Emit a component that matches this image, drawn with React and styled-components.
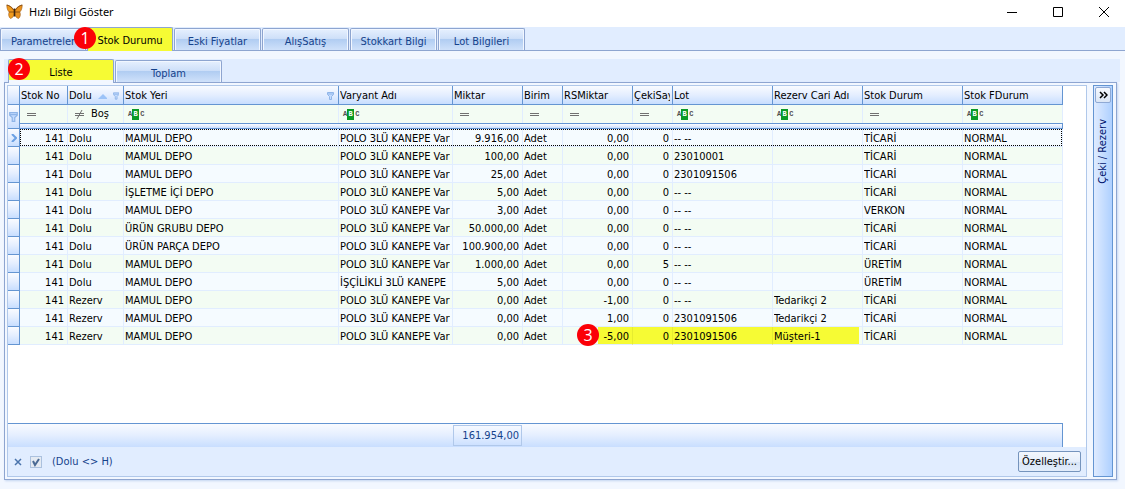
import React from 'react'
import styled, { createGlobalStyle, css } from 'styled-components'

const colors = {
  strip: '#e1edff',
  page: '#f2f7ff',
  line: '#8ea5d0',
  softLine: '#b0c8ea',
  gridLine: '#e1edff',
  headLine: '#6495d2',
  link: '#15428b',
  yellow: '#f6fb34',
}

const GlobalStyle = createGlobalStyle`
  * { box-sizing: border-box; }
  body {
    margin: 0;
    background: ${colors.page};
    color: #000;
    font: 11px/14px "DejaVu Sans Condensed", "DejaVu Sans", sans-serif;
  }
  button { font: inherit; color: inherit; }
`

const Window = styled.div`
  display: flex;
  flex-direction: column;
  min-height: 100vh;
`

const TitleBar = styled.header`
  display: flex;
  align-items: center;
  height: 27px;
  padding: 0 13px 4px 6px;
  background: #fff;
`

const Title = styled.h1`
  flex: 1;
  margin: 0 0 0 6px;
  font: 11px/16px "Noto Sans", "Open Sans", sans-serif;
`

const WindowButtons = styled.div`
  display: flex;
  gap: 30px;
`

const WindowButton = styled.button`
  display: flex;
  align-items: center;
  justify-content: center;
  width: 16px;
  height: 16px;
  padding: 0;
  border: 0;
  background: none;
`

const MainTabs = styled.nav`
  display: flex;
  align-items: flex-end;
  gap: 1px;
  height: 24px;
  border-bottom: 1px solid ${colors.line};
  background: ${colors.strip};
`

const SubTabs = styled(MainTabs)`
  height: 23px;
  margin-right: -3px;
  padding-left: 4px;
  border-bottom: 0;
`

const Tab = styled.button`
  position: relative;
  width: ${(p) => p.$width}px;
  height: 22px;
  padding: 4px 0 0;
  border: 1px solid ${colors.line};
  border-bottom: 0;
  border-radius: 2px 2px 0 0;
  background: linear-gradient(#e6f0fe, #cfe0f9 45%, #b1cdf2 50%, #cfe1fa);
  box-shadow: inset 1px 1px #f2f7ff, inset -1px 0 #f2f7ff;
  color: ${colors.link};

  ${(p) => p.$active && css`
    z-index: 1;
    height: 24px;
    padding: 2px 0 0;
    margin-bottom: -1px;
    background: linear-gradient(${colors.yellow} 20px, ${p.$sub ? colors.page : colors.yellow} 20px);
    box-shadow: none;
    color: #000;
  `}
`

const Badge = styled.span`
  position: absolute;
  z-index: 2;
  left: ${(p) => p.$left}px;
  top: ${(p) => p.$top}px;
  width: 22px;
  height: 22px;
  border-radius: 50%;
  background: #fb0007;
  color: #fff;
  font: 16px/22px "Open Sans", sans-serif;
  text-align: center;
`

const Page = styled.main`
  display: flex;
  flex: 1;
  flex-direction: column;
  padding: 8px 8px 9px 4px;
`

const Panel = styled.section`
  display: flex;
  flex: 1;
  gap: 6px;
  padding: 2px 3px 2px 2px;
  border: 1px solid ${colors.line};
  box-shadow: 1px 1px 2px #c3d5f0;
`

const Grid = styled.div`
  display: flex;
  flex: 1;
  flex-direction: column;
  min-width: 0;
  border: 1px solid ${colors.softLine};
  background: #fff;
`

const GridBody = styled.div`
  flex: 1;
  padding-right: 23px;
`

const Table = styled.table`
  width: 100%;
  table-layout: fixed;
  border-collapse: separate;
  border-spacing: 0;
`

const headFill = 'linear-gradient(#f9fbff, #e4eeff 50%, #c8deff)'

const HeadCell = styled.th`
  height: 19px;
  padding: 2px 0 0 1px;
  border-right: 1px solid ${colors.headLine};
  border-bottom: 1px solid ${colors.headLine};
  background: ${headFill};
  font-weight: normal;
  text-align: left;
  white-space: nowrap;
`

const HeadContent = styled.div`
  display: flex;
  align-items: center;
  gap: 6px;
  margin-right: 2px;
  padding-right: 2px;
  overflow: hidden;
`

const HeadLabel = styled.span`
  flex: ${(p) => (p.$grow ? 1 : 'none')};
`

const FilterCell = styled.td`
  height: 18px;
  padding: 0 0 0 ${(p) => (p.$wide ? 7 : 4)}px;
  border-right: 1px solid ${colors.gridLine};
  background: #f3fcf3;
`

const FilterContent = styled.div`
  display: flex;
  align-items: center;
  gap: 7px;
`

const Separator = styled.td`
  height: 6px;
  padding: 0;
  border: 1px solid ${colors.headLine};
  border-left: 0;
  background: ${headFill};
`

const Indicator = styled.td`
  padding: 0;
  border-right: 1px solid ${colors.headLine};
  border-bottom: 1px solid ${colors.headLine};
  background: ${headFill};

  svg { display: block; margin: 0 auto; }
`

const Row = styled.tr`
  background: ${(p) => (p.$odd ? '#f3fcf3' : '#f5fbff')};
`

const dotsX = 'repeating-linear-gradient(to right, #000 0 1px, transparent 1px 2px)'
const dotsY = 'repeating-linear-gradient(#000 0 1px, transparent 1px 2px)'

const Cell = styled.td`
  position: relative;
  height: 18px;
  padding: 2px ${(p) => (p.$right ? 3 : 2)}px 0 1px;
  border-right: 1px solid ${colors.gridLine};
  border-bottom: 1px solid ${colors.gridLine};
  text-align: ${(p) => (p.$right ? 'right' : 'left')};
  white-space: nowrap;

  ${(p) => p.$focused && css`
    background:
      ${dotsX} top / 100% 1px no-repeat,
      ${dotsX} bottom / 100% 1px no-repeat;

    &:nth-child(2) {
      background:
        ${dotsX} top / 100% 1px no-repeat,
        ${dotsX} bottom / 100% 1px no-repeat,
        ${dotsY} left / 1px 100% no-repeat;
    }

    &:last-child {
      background:
        ${dotsX} top / 100% 1px no-repeat,
        ${dotsX} bottom / 100% 1px no-repeat,
        ${dotsY} right / 1px 100% no-repeat;
    }
  `}

  ${(p) => p.$mark === 'start' && css`
    background: linear-gradient(to right, transparent 35px, ${colors.yellow} 35px);
    border-right-color: #e6ec30;
  `}
  ${(p) => p.$mark === 'full' && css`
    background: ${colors.yellow};
    border-right-color: #e6ec30;
  `}
  ${(p) => p.$mark === 'end' && css`
    background: linear-gradient(to left, transparent 3px, ${colors.yellow} 3px);
  `}
`

const Clip = styled.div`
  overflow: hidden;
`

const Summary = styled.div`
  display: flex;
  height: 24px;
  margin-right: 23px;
  padding: 1px 540px 1px 0;
  justify-content: flex-end;
  border-top: 1px solid ${colors.headLine};
  border-right: 1px solid ${colors.headLine};
  background: ${headFill};
`

const Total = styled.output`
  width: 69px;
  padding: 3px 2px;
  border: 1px solid ${colors.softLine};
  color: ${colors.link};
  text-align: right;
`

const FilterPanel = styled.footer`
  display: flex;
  align-items: center;
  height: 29px;
  padding: 0 5px 0 6px;
  background: ${colors.strip};
  color: ${colors.link};
`

const ClearButton = styled.button`
  display: flex;
  margin-right: 8px;
  padding: 0;
  border: 0;
  background: none;
`

const FilterToggle = styled.label`
  display: flex;
  flex: 1;
  align-items: center;
  gap: 10px;
`

const CheckBox = styled.input`
  width: 12px;
  height: 12px;
  margin: 0;
  appearance: none;
  border: 1px solid #abc1de;
  background: #f4f7fb;

  &:checked {
    background: #e4eaf2 url("data:image/svg+xml,%3Csvg xmlns='http://www.w3.org/2000/svg' viewBox='0 0 10 10'%3E%3Cpath d='M2 4l2 4 4-6' fill='none' stroke='%234a6a94' stroke-width='2'/%3E%3C/svg%3E");
  }
`

const CustomizeButton = styled.button`
  height: 21px;
  padding: 0 3px;
  border: 1px solid #7594bd;
  border-radius: 2px;
  background: linear-gradient(#f3f7fd, #e6effb 50%, #d6e3f5 50%, #e3edfb);
  color: #000;
`

const SidePanel = styled.aside`
  display: flex;
  flex-direction: column;
  align-items: center;
  gap: 16px;
  width: 20px;
  padding-top: 1px;
  border: 1px solid ${colors.headLine};
  background: linear-gradient(to right, #dfebff, #aed0ff);
`

const ExpandButton = styled.button`
  display: flex;
  align-items: center;
  justify-content: center;
  width: 16px;
  height: 16px;
  padding: 0;
  border: 1px solid #8fa9d4;
  border-radius: 2px;
  background: linear-gradient(#f6f9fe, #dbe6f6);
`

const SideLabel = styled.span`
  color: #00156e;
  writing-mode: vertical-rl;
  transform: rotate(180deg);
`

const AbcIcon = styled.span`
  display: flex;
  align-items: center;
  color: #505050;
  font: bold 7px/11px "Liberation Mono", monospace;

  b {
    width: 7px;
    height: 11px;
    margin-right: 1px;
    background: #0a9a25;
    color: #fff;
    text-align: center;
  }
`

const Abc = () => <AbcIcon>A<b>B</b>C</AbcIcon>

const Equals = () => (
  <svg width="9" height="5" shapeRendering="crispEdges">
    <path d="M0 1.5h9M0 3.5h9" stroke="#707070" />
  </svg>
)

const NotEquals = () => (
  <svg width="9" height="9">
    <path d="M0 3.5h9M0 5.5h9M2 9L7 0" stroke="#707070" fill="none" />
  </svg>
)

const Funnel = ({ size = 7 }) => (
  <svg width={size} height={size + 1} viewBox="0 0 7 8">
    <path d="M.5.5h6v2l-2 2v3h-2v-3l-2-2zM1 2h5" fill="#c3dbff" stroke="#8fb5e8" />
  </svg>
)

const Butterfly = () => (
  <svg width="17" height="16" viewBox="0 0 17 16">
    <path d="M8.500 7C7 4 4 1.500.8 1c0 3 .7 5.500 2.400 7C2.200 10 2.500 13 4.500 14.500 6.500 14 8 12 8.500 10z" fill="#f09a1c" stroke="#a05a14" strokeWidth=".6" />
    <path d="M8.500 7C10 4 13 1.500 16.200 1c0 3-.7 5.500-2.400 7 1 2 .7 5-1.300 6.500C10.500 14 9 12 8.500 10z" fill="#e8901c" stroke="#a05a14" strokeWidth=".6" />
    <path d="M.8 1C3.500 1.500 6 3.500 7.500 6M16.200 1C13.500 1.500 11 3.500 9.500 6M3.200 8L8 8M13.800 8L9 8" stroke="#7a4210" strokeWidth=".8" fill="none" />
    <path d="M8.500 4.500v8" stroke="#3b2410" strokeWidth="1.600" />
  </svg>
)

const mainTabs = ['Parametreler', 'Stok Durumu', 'Eski Fiyatlar', 'AlışSatış', 'Stokkart Bilgi', 'Lot Bilgileri']

const columns = [
  { title: 'Stok No', width: 48, filter: 'eq', right: true },
  { title: 'Dolu', width: 56, filter: 'neq', sorted: true, filtered: true },
  { title: 'Stok Yeri', filter: 'abc', filtered: true },
  { title: 'Varyant Adı', width: 114, filter: 'abc' },
  { title: 'Miktar', width: 70, filter: 'eq', right: true },
  { title: 'Birim', width: 40, filter: 'eq' },
  { title: 'RSMiktar', width: 70, filter: 'eq', right: true },
  { title: 'ÇekiSay', width: 40, filter: 'eq', right: true },
  { title: 'Lot', width: 100, filter: 'abc' },
  { title: 'Rezerv Cari Adı', width: 90, filter: 'abc' },
  { title: 'Stok Durum', width: 100, filter: 'eq' },
  { title: 'Stok FDurum', width: 100, filter: 'abc' },
]

const POLO = 'POLO 3LÜ KANEPE Vary'

const rows = [
  ['141', 'Dolu', 'MAMUL DEPO', POLO, '9.916,00', 'Adet', '0,00', '0', '-- --', '', 'TİCARİ', 'NORMAL'],
  ['141', 'Dolu', 'MAMUL DEPO', POLO, '100,00', 'Adet', '0,00', '0', '23010001', '', 'TİCARİ', 'NORMAL'],
  ['141', 'Dolu', 'MAMUL DEPO', POLO, '25,00', 'Adet', '0,00', '0', '2301091506', '', 'TİCARİ', 'NORMAL'],
  ['141', 'Dolu', 'İŞLETME İÇİ DEPO', POLO, '5,00', 'Adet', '0,00', '0', '-- --', '', 'TİCARİ', 'NORMAL'],
  ['141', 'Dolu', 'MAMUL DEPO', POLO, '3,00', 'Adet', '0,00', '0', '-- --', '', 'VERKON', 'NORMAL'],
  ['141', 'Dolu', 'ÜRÜN GRUBU DEPO', POLO, '50.000,00', 'Adet', '0,00', '0', '-- --', '', 'TİCARİ', 'NORMAL'],
  ['141', 'Dolu', 'ÜRÜN PARÇA DEPO', POLO, '100.900,00', 'Adet', '0,00', '0', '-- --', '', 'TİCARİ', 'NORMAL'],
  ['141', 'Dolu', 'MAMUL DEPO', POLO, '1.000,00', 'Adet', '0,00', '5', '-- --', '', 'ÜRETİM', 'NORMAL'],
  ['141', 'Dolu', 'MAMUL DEPO', 'İŞÇİLİKLİ 3LÜ KANEPE', '5,00', 'Adet', '0,00', '0', '-- --', '', 'ÜRETİM', 'NORMAL'],
  ['141', 'Rezerv', 'MAMUL DEPO', POLO, '0,00', 'Adet', '-1,00', '0', '-- --', 'Tedarikçi 2', 'TİCARİ', 'NORMAL'],
  ['141', 'Rezerv', 'MAMUL DEPO', POLO, '0,00', 'Adet', '1,00', '0', '2301091506', 'Tedarikçi 2', 'TİCARİ', 'NORMAL'],
  ['141', 'Rezerv', 'MAMUL DEPO', POLO, '0,00', 'Adet', '-5,00', '0', '2301091506', 'Müşteri-1', 'TİCARİ', 'NORMAL'],
]

const marks = { 6: 'start', 7: 'full', 8: 'full', 9: 'end' }

const StockTable = () => (
  <Table>
    <colgroup>
      <col width="12" />
      {columns.map((c) => <col key={c.title} width={c.width} />)}
    </colgroup>
    <thead>
      <tr>
        <HeadCell />
        {columns.map((c) => (
          <HeadCell key={c.title} scope="col">
            <HeadContent>
              <HeadLabel $grow={!c.sorted}>{c.title}</HeadLabel>
              {c.sorted && <svg width="10" height="5"><path d="M0 5l5-5 5 5z" fill="#9cc3f8" /></svg>}
              {c.filtered && <Funnel />}
            </HeadContent>
          </HeadCell>
        ))}
      </tr>
    </thead>
    <tbody>
      <tr>
        <Indicator rowSpan={2}><Funnel size={9} /></Indicator>
        {columns.map((c) => (
          <FilterCell key={c.title} $wide={c.filter !== 'abc'}>
            <FilterContent>
              {c.filter === 'abc' && <Abc />}
              {c.filter === 'eq' && <Equals />}
              {c.filter === 'neq' && <><NotEquals />Boş</>}
            </FilterContent>
          </FilterCell>
        ))}
      </tr>
      <tr><Separator colSpan={columns.length} /></tr>
      {rows.map((row, i) => (
        <Row key={i} $odd={i % 2 === 1}>
          <Indicator>
            {i === 0 && <svg width="6" height="8"><path d="M1 0l4 4-4 4" fill="none" stroke="#6ba0e4" strokeWidth="2" /></svg>}
          </Indicator>
          {row.map((value, j) => {
            const mark = i === 11 ? marks[j] : undefined
            return (
              <Cell key={j} $right={columns[j].right} $focused={i === 0} $mark={mark}>
                {mark === 'start' && <Badge $left={14} $top={-3}>3</Badge>}
                <Clip>{value}</Clip>
              </Cell>
            )
          })}
        </Row>
      ))}
    </tbody>
  </Table>
)

const App = () => {
  return (
    <>
      <GlobalStyle />
      <Window>
        <TitleBar>
          <Butterfly />
          <Title>Hızlı Bilgi Göster</Title>
          <WindowButtons>
            <WindowButton aria-label="Simge durumuna küçült">
              <svg width="10" height="10"><path d="M0 5.500h10" stroke="#000" /></svg>
            </WindowButton>
            <WindowButton aria-label="Ekranı kapla">
              <svg width="10" height="10"><path d="M.5.5h9v9h-9z" stroke="#000" fill="none" /></svg>
            </WindowButton>
            <WindowButton aria-label="Kapat">
              <svg width="10" height="10"><path d="M0 0l10 10M10 0L0 10" stroke="#000" /></svg>
            </WindowButton>
          </WindowButtons>
        </TitleBar>
        <MainTabs>
          {mainTabs.map((name, i) => (
            <Tab key={name} $width={i < 2 ? 86 : 87} $active={i === 1}>
              {i === 1 && <Badge $left={-14} $top={-1}>1</Badge>}
              {name}
            </Tab>
          ))}
        </MainTabs>
        <Page>
          <SubTabs>
            <Tab $width={106} $active $sub>
              <Badge $left={-1} $top={-2}>2</Badge>
              Liste
            </Tab>
            <Tab $width={107}>Toplam</Tab>
          </SubTabs>
          <Panel>
            <Grid>
              <GridBody>
                <StockTable />
              </GridBody>
              <Summary><Total>161.954,00</Total></Summary>
              <FilterPanel>
                <ClearButton aria-label="Filtreyi temizle">
                  <svg width="8" height="8"><path d="M1 1l6 6M7 1L1 7" stroke="#4a74ac" strokeWidth="1.500" /></svg>
                </ClearButton>
                <FilterToggle>
                  <CheckBox type="checkbox" defaultChecked />
                  {'(Dolu <> H)'}
                </FilterToggle>
                <CustomizeButton>Özelleştir...</CustomizeButton>
              </FilterPanel>
            </Grid>
            <SidePanel>
              <ExpandButton aria-label="Genişlet">
                <svg width="9" height="8"><path d="M1 1l3 3-3 3M5 1l3 3-3 3" fill="none" stroke="#000" strokeWidth="1.500" /></svg>
              </ExpandButton>
              <SideLabel>Çeki / Rezerv</SideLabel>
            </SidePanel>
          </Panel>
        </Page>
      </Window>
    </>
  )
}

export default App
